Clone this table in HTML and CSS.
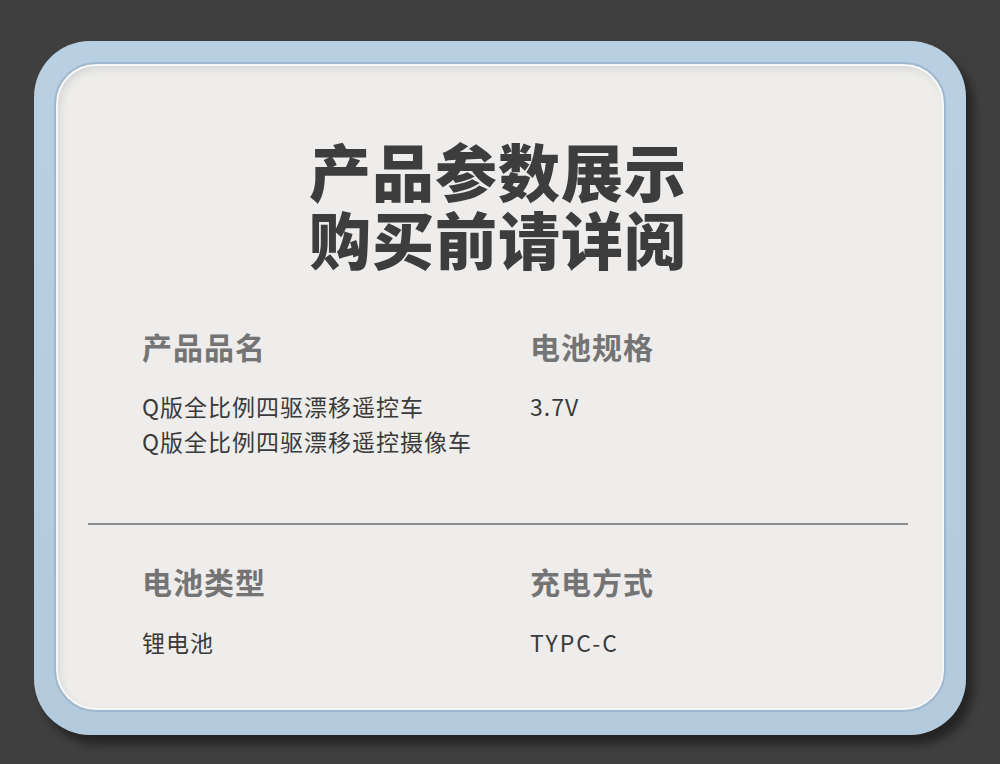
FILE: index.html
```html
<!DOCTYPE html>
<html lang="zh-CN">
<head>
<meta charset="utf-8">
<title>产品参数展示</title>
<link rel="stylesheet" href="styles.css">
</head>
<body>
<div class="frame">
  <div class="card">
    <h1 class="title"><span class="title-line">产品参数展示</span><span class="title-line">购买前请详阅</span></h1>
    <div class="grid grid-top">
      <div class="cell">
        <div class="label">产品品名</div>
        <div class="value">Q版全比例四驱漂移遥控车<br>Q版全比例四驱漂移遥控摄像车</div>
      </div>
      <div class="cell">
        <div class="label">电池规格</div>
        <div class="value">3.7V</div>
      </div>
    </div>
    <div class="divider"></div>
    <div class="grid grid-bottom">
      <div class="cell">
        <div class="label">电池类型</div>
        <div class="value">锂电池</div>
      </div>
      <div class="cell">
        <div class="label">充电方式</div>
        <div class="value value-latin">TYPC-C</div>
      </div>
    </div>
  </div>
</div>
</body>
</html>
```
FILE: styles.css
```css
html, body {
  margin: 0;
  padding: 0;
}
body {
  width: 1000px;
  height: 764px;
  background: #3f3f3f;
  font-family: "Noto Sans CJK SC", "Noto Sans", sans-serif;
  overflow: hidden;
  padding-top: 41px;
  box-sizing: border-box;
}
.frame {
  margin-left: 34px;
  width: 932px;
  height: 694px;
  box-sizing: border-box;
  padding: 21px 20px 23px 20px;
  border-radius: 56px;
  background: linear-gradient(180deg, #b9d0e3 0%, #b3cadd 100%);
  box-shadow: 7px 9px 10px rgba(0, 0, 0, 0.45);
}
.card {
  height: 100%;
  box-sizing: border-box;
  border-radius: 42px;
  background: #eeedeb;
  border: 2px solid #9fb8cf;
  box-shadow: inset 0 0 0 2px #f7f7f5, inset 3px 4px 8px rgba(120, 130, 140, 0.25);
  padding: 72px 36px 0 86px;
  display: flex;
  flex-direction: column;
}
.title {
  margin: 0 0 0 -88px;
  width: 888px;
  text-align: center;
  font-size: 62px;
  font-weight: 900;
  color: #3d3d3d;
  letter-spacing: 1px;
  display: flex;
  flex-direction: column;
  align-items: center;
}
.title-line {
  display: block;
  height: 68px;
  line-height: 68px;
}
.grid {
  display: grid;
  grid-template-columns: 388px 1fr;
}
.grid-top {
  margin-top: 54px;
}
.label {
  font-size: 30px;
  line-height: 40px;
  font-weight: 700;
  color: #747474;
  letter-spacing: 1px;
}
.value {
  font-size: 23px;
  line-height: 35px;
  color: #3a3a3a;
  letter-spacing: 1px;
  margin-top: 23px;
}
.value-latin {
  letter-spacing: 2px;
}
.divider {
  height: 2px;
  background: #8c8c8c;
  margin: 64px 0 0 -54px;
}
.grid-bottom {
  margin-top: 36px;
}
.grid-bottom .value {
  margin-top: 24px;
}
```
